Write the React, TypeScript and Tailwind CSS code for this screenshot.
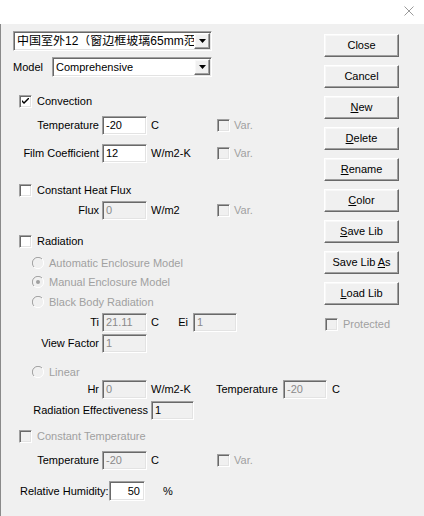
import React from 'react';

const sunken =
  'border border-t-[#a0a0a0] border-l-[#a0a0a0] border-b-white border-r-white shadow-[inset_1px_1px_0_#696969,inset_-1px_-1px_0_#e3e3e3]';
const raised =
  'border border-t-white border-l-white border-b-[#696969] border-r-[#696969] shadow-[inset_-1px_-1px_0_#a0a0a0,inset_1px_1px_0_#f8f8f8]';

function Edit({
  value,
  w = 'w-[45px]',
  disabled = false,
  readOnly = false,
  right = false,
  h = 'h-[19px]',
}: {
  value: string;
  w?: string;
  disabled?: boolean;
  readOnly?: boolean;
  right?: boolean;
  h?: string;
}) {
  const bg = disabled || readOnly ? 'bg-[#f0f0f0]' : 'bg-white';
  const color = disabled ? 'text-[#8a8a8a]' : 'text-black';
  return (
    <div
      className={`${w} ${h} shrink-0 ${sunken} ${bg} ${color} flex items-center px-[3px] ${right ? 'justify-end pr-[4px]' : ''}`}
    >
      {value}
    </div>
  );
}

function Check({ checked = false, disabled = false }: { checked?: boolean; disabled?: boolean }) {
  return (
    <span
      className={`w-[13px] h-[13px] shrink-0 ${sunken} ${disabled ? 'bg-[#f0f0f0]' : 'bg-white'} flex items-center justify-center`}
    >
      {checked && (
        <svg width="7" height="7" viewBox="0 0 7 7">
          <path d="M0 2 L0 4 L2 6 L7 1 L7 -1 L2 4 Z" fill="#000" />
        </svg>
      )}
    </span>
  );
}

function Radio({ on = false }: { on?: boolean }) {
  return (
    <svg width="12" height="12" viewBox="0 0 12 12" className="shrink-0">
      <circle cx="6" cy="6" r="5.5" fill="#f0f0f0" />
      <path d="M10 2 A5.5 5.5 0 0 0 2 10" stroke="#a0a0a0" strokeWidth="1" fill="none" />
      <path d="M2 10 A5.5 5.5 0 0 0 10 2" stroke="#ffffff" strokeWidth="1" fill="none" />
      {on && <circle cx="6" cy="6" r="2" fill="#a0a0a0" />}
    </svg>
  );
}

function Combo({ text, w, cjk = false }: { text: string; w: string; cjk?: boolean }) {
  return (
    <div className={`${w} h-[20px] shrink-0 ${sunken} bg-white flex items-center pl-[3px] pr-[1px]`}>
      <div
        className={`flex-1 overflow-hidden whitespace-nowrap ${cjk ? "text-[12px] font-['Liberation_Sans','Noto_Sans_CJK_SC',sans-serif]" : ''}`}
      >
        {text}
      </div>
      <div className={`w-[16px] h-[16px] shrink-0 bg-[#f0f0f0] ${raised} flex items-center justify-center`}>
        <svg width="7" height="4" viewBox="0 0 7 4">
          <path d="M0 0 H7 L3.5 4 Z" fill="#000" />
        </svg>
      </div>
    </div>
  );
}

function Btn({ children }: { children: React.ReactNode }) {
  return (
    <div className={`w-[75px] h-[23px] bg-[#f0f0f0] ${raised} flex items-center justify-center`}>
      {children}
    </div>
  );
}

function Var() {
  return (
    <div className="flex items-center shrink-0">
      <Check disabled />
      <span className="ml-[4px] text-[#a0a0a0]">Var.</span>
    </div>
  );
}

function Label({ children, w = 'w-[99px]' }: { children: React.ReactNode; w?: string }) {
  return <span className={`${w} shrink-0 text-right whitespace-nowrap`}>{children}</span>;
}

function Unit({ children, w }: { children: React.ReactNode; w: string }) {
  return <span className={`${w} shrink-0 whitespace-nowrap`}>{children}</span>;
}

export default function App() {
  return (
    <div className="w-[424px] h-[516px] bg-white font-['Liberation_Sans',Arial,sans-serif] text-[11px] text-black leading-none overflow-hidden">
      {/* title bar */}
      <div className="h-[24px] flex justify-end items-start pt-[6px] pr-[10px]">
        <svg width="10" height="10" viewBox="0 0 10 10">
          <path d="M0.5 0.5 L9.5 9.5 M9.5 0.5 L0.5 9.5" stroke="#9a9a9a" strokeWidth="1" />
        </svg>
      </div>

      <div className="h-[492px] bg-[#f0f0f0] shadow-[inset_1px_0_0_#8a8a8a] flex">
        {/* left column */}
        <div className="w-[324px] shrink-0 flex flex-col pt-[7px]">
          <div className="ml-[13px]">
            <Combo text="中国室外12（窗边框玻璃65mm范围）" w="w-[199px]" cjk />
          </div>

          <div className="mt-[6px] flex items-center h-[20px] pl-[13px]">
            <Unit w="w-[39px]">Model</Unit>
            <Combo text="Comprehensive" w="w-[160px]" />
          </div>

          <div className="mt-[18px] flex items-center h-[13px] pl-[19px]">
            <Check checked />
            <span className="ml-[5px]">Convection</span>
          </div>

          <div className="mt-[8px] flex items-center h-[19px]">
            <Label>Temperature</Label>
            <div className="ml-[3px]"><Edit value="-20" /></div>
            <span className="ml-[4px]" />
            <Unit w="w-[66px]">C</Unit>
            <Var />
          </div>

          <div className="mt-[9px] flex items-center h-[19px]">
            <Label>Film Coefficient</Label>
            <div className="ml-[3px]"><Edit value="12" /></div>
            <span className="ml-[4px]" />
            <Unit w="w-[66px]">W/m2-K</Unit>
            <Var />
          </div>

          <div className="mt-[21px] flex items-center h-[13px] pl-[19px]">
            <Check />
            <span className="ml-[5px]">Constant Heat Flux</span>
          </div>

          <div className="mt-[4px] flex items-center h-[19px]">
            <Label>Flux</Label>
            <div className="ml-[3px]"><Edit value="0" disabled /></div>
            <span className="ml-[4px]" />
            <Unit w="w-[66px]">W/m2</Unit>
            <Var />
          </div>

          <div className="mt-[15px] flex items-center h-[13px] pl-[19px]">
            <Check />
            <span className="ml-[5px]">Radiation</span>
          </div>

          <div className="mt-[9px] flex items-center h-[12px] pl-[32px] text-[#a0a0a0]">
            <Radio />
            <span className="ml-[5px]">Automatic Enclosure Model</span>
          </div>
          <div className="mt-[7px] flex items-center h-[12px] pl-[32px] text-[#a0a0a0]">
            <Radio on />
            <span className="ml-[5px]">Manual Enclosure Model</span>
          </div>
          <div className="mt-[8px] flex items-center h-[12px] pl-[32px] text-[#a0a0a0]">
            <Radio />
            <span className="ml-[5px]">Black Body Radiation</span>
          </div>

          <div className="mt-[5px] flex items-center h-[19px]">
            <Label>Ti</Label>
            <div className="ml-[3px]"><Edit value="21.11" disabled /></div>
            <span className="ml-[4px]" />
            <Unit w="w-[22px]">C</Unit>
            <span className="w-[17px] shrink-0 text-right pr-[2px]">Ei</span>
            <div className="ml-[3px]"><Edit value="1" w="w-[44px]" disabled /></div>
          </div>

          <div className="mt-[2px] flex items-center h-[19px]">
            <Label>View Factor</Label>
            <div className="ml-[3px]"><Edit value="1" disabled /></div>
          </div>

          <div className="mt-[13px] flex items-center h-[12px] pl-[32px] text-[#a0a0a0]">
            <Radio />
            <span className="ml-[5px]">Linear</span>
          </div>

          <div className="mt-[2px] flex items-center h-[19px]">
            <Label>Hr</Label>
            <div className="ml-[3px]"><Edit value="0" disabled /></div>
            <span className="ml-[4px]" />
            <Unit w="w-[65px]">W/m2-K</Unit>
            <Unit w="w-[63px]">Temperature</Unit>
            <div className="ml-[4px] shrink-0"><Edit value="-20" w="w-[44px]" disabled /></div>
            <span className="ml-[5px] shrink-0">C</span>
          </div>

          <div className="mt-[2px] flex items-center h-[19px]">
            <Label w="w-[148px]">Radiation Effectiveness</Label>
            <div className="ml-[3px]"><Edit value="1" w="w-[43px]" readOnly /></div>
          </div>

          <div className="mt-[10px] flex items-center h-[13px] pl-[19px]">
            <Check disabled />
            <span className="ml-[5px] text-[#a0a0a0]">Constant Temperature</span>
          </div>

          <div className="mt-[8px] flex items-center h-[19px]">
            <Label>Temperature</Label>
            <div className="ml-[3px]"><Edit value="-20" disabled /></div>
            <span className="ml-[4px]" />
            <Unit w="w-[66px]">C</Unit>
            <Var />
          </div>

          <div className="mt-[11px] flex items-center h-[20px] pl-[20px]">
            <Unit w="w-[89px]">Relative Humidity:</Unit>
            <Edit value="50" w="w-[36px]" h="h-[20px]" right />
            <span className="ml-[18px]">%</span>
          </div>
        </div>

        {/* right column */}
        <div className="flex flex-col pt-[10px] gap-[8px]">
          <Btn>Close</Btn>
          <Btn>Cancel</Btn>
          <Btn><span><u>N</u>ew</span></Btn>
          <Btn><span><u>D</u>elete</span></Btn>
          <Btn><span><u>R</u>ename</span></Btn>
          <Btn><span><u>C</u>olor</span></Btn>
          <Btn><span><u>S</u>ave Lib</span></Btn>
          <Btn><span>Save Lib <u>A</u>s</span></Btn>
          <Btn><span><u>L</u>oad Lib</span></Btn>
          <div className="mt-[5px] flex items-center h-[13px] pl-[1px]">
            <Check disabled />
            <span className="ml-[5px] text-[#a0a0a0]">Protected</span>
          </div>
        </div>
      </div>
    </div>
  );
}
